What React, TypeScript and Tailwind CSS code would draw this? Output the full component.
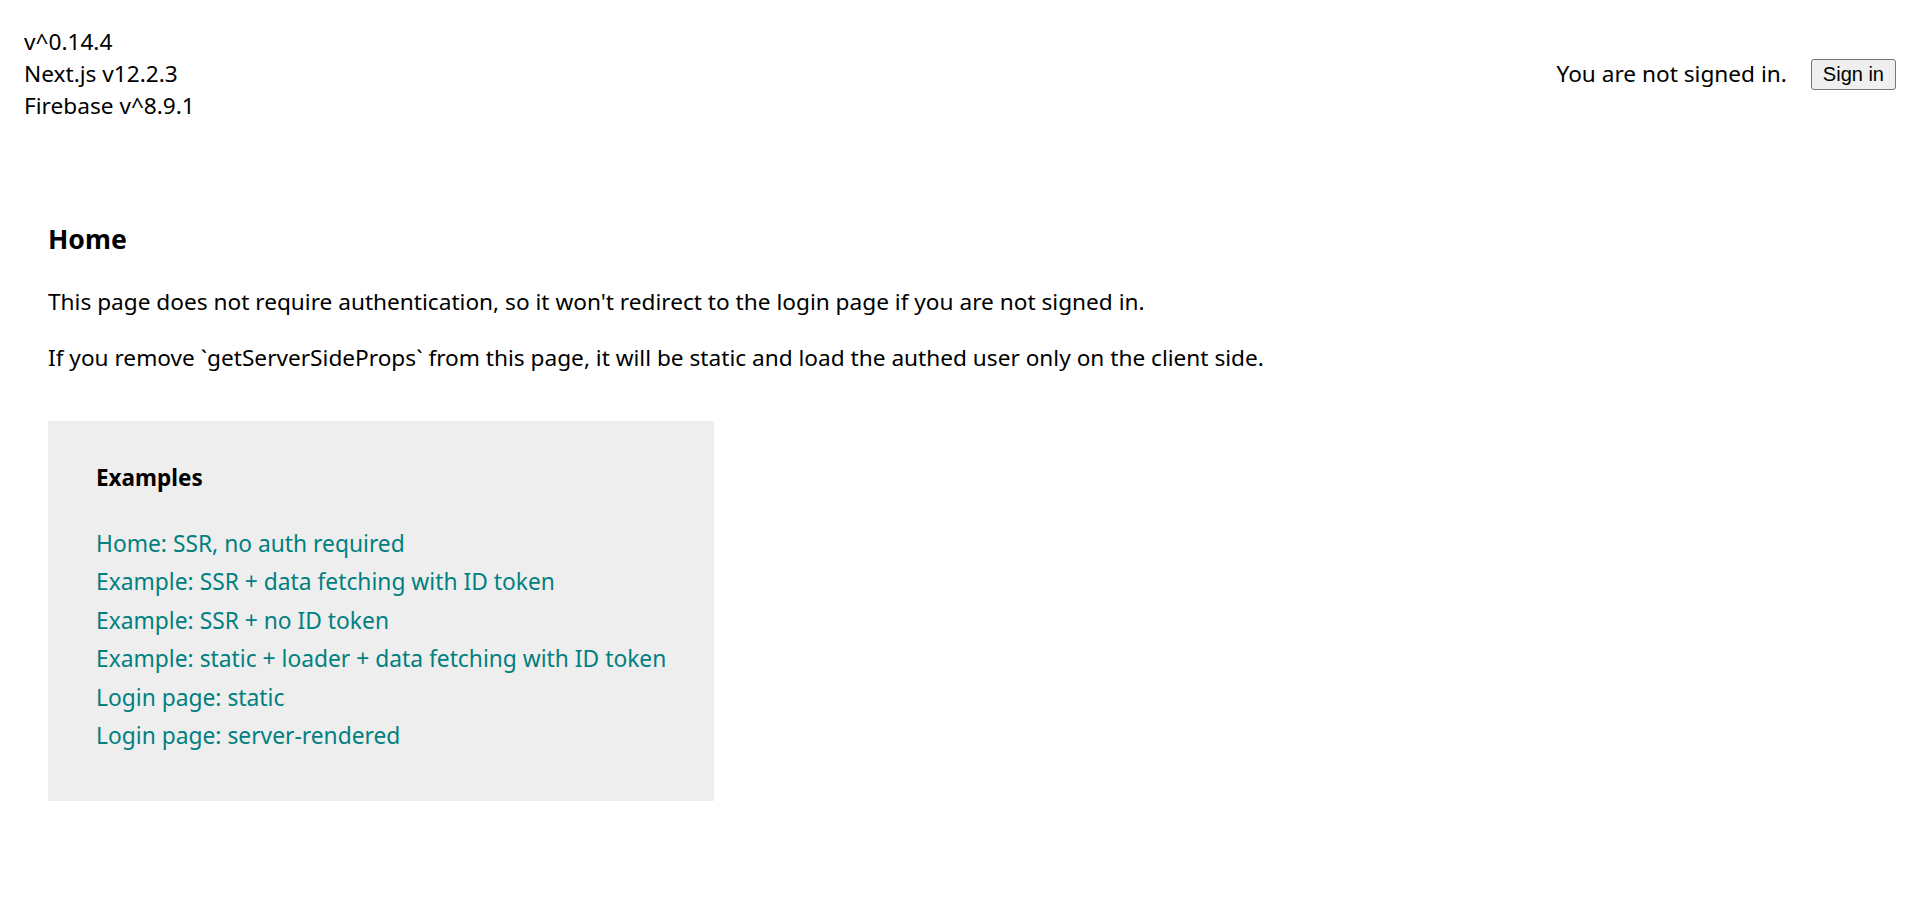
import React from 'react';

const demoLinks = [
  'Home: SSR, no auth required',
  'Example: SSR + data fetching with ID token',
  'Example: SSR + no ID token',
  'Example: static + loader + data fetching with ID token',
  'Login page: static',
  'Login page: server-rendered',
];

const Header: React.FC = () => (
  <div className="flex items-center justify-between px-6 pt-[26px] pb-[22px]">
    <div>
      <div>v^0.14.4</div>
      <div>Next.js v12.2.3</div>
      <div>Firebase v^8.9.1</div>
    </div>
    <div className="flex items-center">
      <p>You are not signed in.</p>
      <button
        type="button"
        className="ml-6 cursor-pointer rounded-[3px] border border-[#767676] bg-[#efefef] px-[11px] py-[3px] font-['Liberation_Sans',Arial,sans-serif] text-[20px] leading-[23px] text-black"
      >
        Sign in
      </button>
    </div>
  </div>
);

const DemoPageLinks: React.FC = () => (
  <div className="inline-block bg-[#eeeeee] px-12 pt-[9px] pb-[46px]">
    <h4 className="mt-8 mb-[31px] text-[22.5px] font-bold leading-[32px]">Examples</h4>
    <div>
      {demoLinks.map(label => (
        <a key={label} href="#" className="block text-[22.8px] text-[#008080] leading-[38.4px]">
          {label}
        </a>
      ))}
    </div>
  </div>
);

export default function App() {
  return (
    <div className="min-h-[910px] bg-white font-['Noto_Sans',sans-serif] text-[22.65px] leading-[32px] text-black">
      <Header />
      <div className="px-12 pt-[49px] pb-12">
        <h3 className="my-[28px] text-[26.6px] font-bold leading-[37px]">Home</h3>
        <div className="mb-[47px]">
          <p className="my-6">
            This page does not require authentication, so it won't redirect to the login page if you are not signed in.
          </p>
          <p className="mt-6 mb-0">
            If you remove `getServerSideProps` from this page, it will be static and load the authed user only on the client side.
          </p>
        </div>
        <DemoPageLinks />
      </div>
    </div>
  );
}
